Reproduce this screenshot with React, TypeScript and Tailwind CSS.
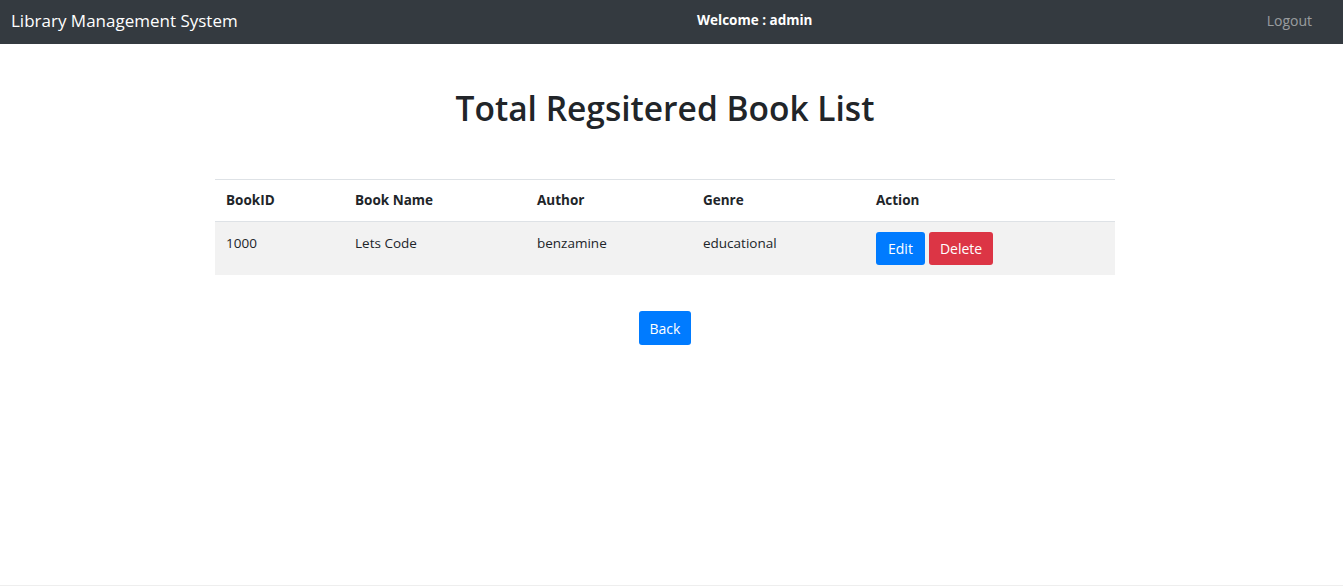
export default function App() {
  const font = { fontFamily: '"Open Sans", "Noto Sans", sans-serif' };
  return (
    <div className="min-h-[586px] bg-white flex flex-col text-[#212529]" style={font}>
      <nav className="h-[44px] bg-[#343a40] flex items-center px-[11px] pb-[3px]">
        <span className="text-[17px] text-white leading-none w-[686px]">Library Management System</span>
        <span className="text-[13.5px] font-bold text-white">Welcome : admin</span>
        <span className="ml-auto text-[14px] text-white/50 mr-[20px]">Logout</span>
      </nav>
      <main className="flex-1 flex flex-col items-center pr-[13px]">
        <h1 className="mt-[48px] text-[33.5px] font-semibold leading-none text-[#212529]">Total Regsitered Book List</h1>
        <table className="mt-[53px] w-[900px] text-[13.5px] border-collapse">
          <thead>
            <tr className="border-t border-b border-[#dee2e6] h-[42px] text-left">
              <th className="w-[129px] px-[11px] pt-[1px] font-bold">BookID</th>
              <th className="w-[182px] px-[11px] pt-[1px] font-bold">Book Name</th>
              <th className="w-[166px] px-[11px] pt-[1px] font-bold">Author</th>
              <th className="w-[173px] px-[11px] pt-[1px] font-bold">Genre</th>
              <th className="px-[11px] pt-[1px] font-bold">Action</th>
            </tr>
          </thead>
          <tbody>
            <tr className="bg-[#f2f2f2] h-[54px] align-top">
              <td className="px-[11px] pt-[11px]">1000</td>
              <td className="px-[11px] pt-[11px]">Lets Code</td>
              <td className="px-[11px] pt-[11px]">benzamine</td>
              <td className="px-[11px] pt-[11px]">educational</td>
              <td className="px-[11px] pt-[10px]">
                <div className="flex gap-[4px]">
                  <button className="h-[33px] px-[12px] rounded-[3px] bg-[#007bff] text-white text-[14px]">Edit</button>
                  <button className="h-[33px] px-[11px] rounded-[3px] bg-[#dc3545] text-white text-[14px]">Delete</button>
                </div>
              </td>
            </tr>
          </tbody>
        </table>
        <button className="mt-[36px] h-[34px] px-[11px] rounded-[3px] bg-[#007bff] text-white text-[14px]">Back</button>
      </main>
      <div className="h-[2px] border-b border-[#eeeeee]" />
    </div>
  );
}
